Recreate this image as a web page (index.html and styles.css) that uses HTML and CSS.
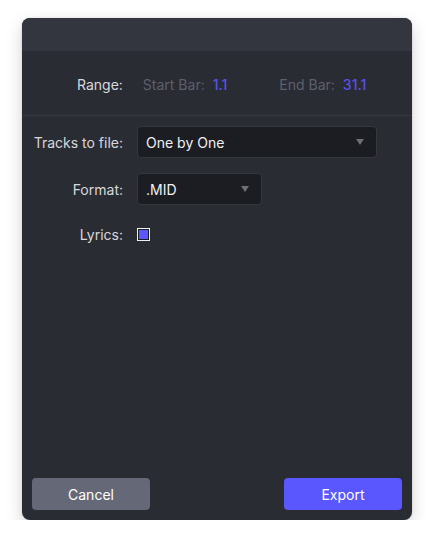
FILE: index.html
```html
<!DOCTYPE html>
<html>
<head>
<meta charset="utf-8">
<link rel="stylesheet" href="styles.css">
</head>
<body>
<div class="dialog">
  <div class="titlebar"></div>
  <div class="range">
    <span class="label range-label">Range:</span>
    <span class="muted">Start Bar:</span><span class="val">1.1</span>
    <span class="muted end">End Bar:</span><span class="val">31.1</span>
  </div>
  <div class="form">
    <div class="row">
      <span class="label">Tracks to file:</span>
      <div class="select wide"><span>One by One</span><span class="caret"></span></div>
    </div>
    <div class="row">
      <span class="label">Format:</span>
      <div class="select narrow"><span>.MID</span><span class="caret"></span></div>
    </div>
    <div class="row check-row">
      <span class="label">Lyrics:</span>
      <span class="checkbox"><span class="fill"></span></span>
    </div>
  </div>
  <div class="footer">
    <button class="btn cancel">Cancel</button>
    <button class="btn export">Export</button>
  </div>
</div>
</body>
</html>
```

FILE: styles.css
```css
html, body { margin: 0; padding: 0; background: #ffffff; }
body { font-family: Inter, "Noto Sans", sans-serif; font-size: 14px; font-weight: 400; padding: 18px 22px 0 22px; }
.dialog {
  width: 390px; height: 502px; background: #2a2c34; border-radius: 8px;
  display: flex; flex-direction: column; overflow: hidden;
  box-shadow: 0 6px 16px rgba(0,0,0,0.18), 0 0 2px rgba(0,0,0,0.15);
}
.titlebar { height: 33px; background: #34363f; flex: none; }
.range {
  height: 65px; border-bottom: 1px solid #363841; display: flex; align-items: center;
  padding-left: 55px; padding-top: 2px; box-sizing: border-box; flex: none;
}
.label { color: #d8d8dc; }
.range-label { margin-right: 20px; }
.muted { color: #5d5f6c; margin-right: 8px; }
.muted.end { margin-left: 52px; }
.val { color: #5753e6; font-weight: 500; }
.form { padding-top: 10px; display: flex; flex-direction: column; gap: 15px; flex: 1; }
.row { display: flex; align-items: center; }
.row .label { width: 101px; text-align: right; margin-right: 14px; }
.select {
  height: 32px; box-sizing: border-box; background: #1c1d22; border: 1px solid #363840;
  border-radius: 4px; display: flex; align-items: center; justify-content: space-between;
  padding: 0 12px 0 8px; color: #f0f0f2;
}
.wide { width: 240px; }
.narrow { width: 125px; }
.caret { width: 0; height: 0; border-left: 4px solid transparent; border-right: 4px solid transparent; border-top: 6px solid #6c6e78; }
.check-row { margin-top: 6px; }
.checkbox { width: 13px; height: 13px; box-sizing: border-box; border: 1px solid #f0f0f0; background: #1c1d22; display: flex; align-items: center; justify-content: center; }
.fill { width: 9px; height: 9px; background: #5b57fe; }
.footer { display: flex; justify-content: space-between; padding: 0 10px 10px 10px; }
.btn { width: 118px; height: 32px; border: none; border-radius: 4px; font-family: inherit; font-size: 14px; font-weight: 400; color: #ffffff; }
.cancel { background: #656876; }
.export { background: #5b57fe; }
```
